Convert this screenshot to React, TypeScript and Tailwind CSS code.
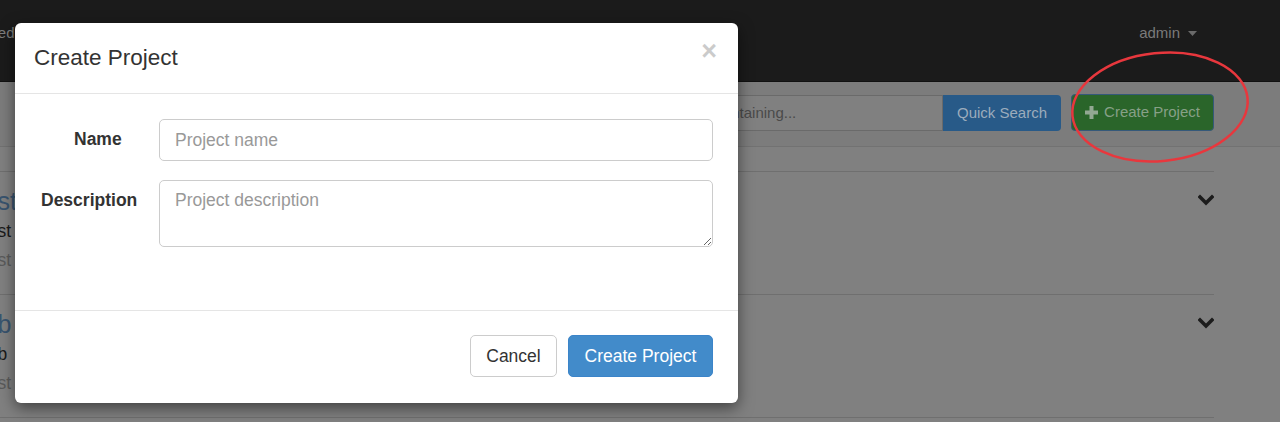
import React from "react";

function Chevron() {
  return (
    <svg width="16" height="13" viewBox="0 0 16 13" className="block">
      <polyline points="2,3 8,9 14,3" fill="none" stroke="#1c1c1c" strokeWidth="3.6" strokeLinecap="square" />
    </svg>
  );
}

function Row({ a, b, c }: { a: string; b: string; c: string }) {
  return (
    <div className="flex h-[123px] border-b border-[#6f6f6f]">
      <div className="flex flex-col pt-[14px]">
        <div className="-ml-[29px] text-[25px] leading-[30px] text-[#38546f]">{a}</div>
        <div className="-ml-[21px] text-[17.5px] leading-[30px] text-[#1a1a1a]">{b}</div>
        <div className="-ml-[21px] text-[17.5px] leading-[29px] text-[#5a5a5a]">{c}</div>
      </div>
      <div className="flex-1" />
      <div className="pt-[22px]">
        <Chevron />
      </div>
    </div>
  );
}

export default function App() {
  return (
    <div
      className="relative h-[422px] w-[1280px] overflow-hidden bg-[#808080]"
      style={{ fontFamily: '"Liberation Sans", Arial, sans-serif' }}
    >
      {/* navbar */}
      <div className="flex h-[82px] items-center bg-[#1b1b1b] border-b border-[#111]">
        <div className="-ml-[28px] mb-[14px] text-[15px] text-[#7d7d7d]">Schedule</div>
        <div className="flex-1" />
        <div className="mr-[83px] mb-[14px] flex items-center gap-[8px] text-[15px] text-[#7a7a7a]">
          <span>admin</span>
          <svg width="9" height="5" viewBox="0 0 9 5">
            <polygon points="0,0 9,0 4.5,5" fill="#6a6a6a" />
          </svg>
        </div>
      </div>

      {/* toolbar */}
      <div className="flex h-[65px] items-start bg-[#7c7c7c] border-b border-[#727272] pt-[13px]">
        <div className="flex-1" />
        <div className="flex h-[36px]">
          <div className="flex w-[299px] items-center border border-[#6a6a6a] bg-[#808080] px-[12px] text-[15px] text-[#4a4a4a]">
            Projects containing...
          </div>
          <div className="flex w-[118px] items-center justify-center rounded-r-[4px] bg-[#285a88] text-[15px] text-[#9cacbc]">
            Quick Search
          </div>
        </div>
        <div className="ml-[10px] mr-[66px] -mt-[1px] flex h-[37px] w-[143px] items-center justify-center gap-[6px] rounded-[4px] border border-[#35597a] bg-[#2a652a] text-[15px] text-[#87a087]">
          <svg width="13" height="13" viewBox="0 0 13 13">
            <rect x="4.5" y="0" width="4" height="13" fill="#93a893" />
            <rect x="0" y="4.5" width="13" height="4" fill="#93a893" />
          </svg>
          <span>Create Project</span>
        </div>
      </div>

      {/* list */}
      <div className="mr-[66px] pt-[24px]">
        <div className="border-t border-[#6f6f6f]" />
        <Row a="Test" b="Test" c="Test" />
        <Row a="Job" b="Job" c="Test" />
      </div>

      {/* red annotation ellipse */}
      <svg className="absolute left-[1060px] top-[45px]" width="200" height="125" viewBox="0 0 200 125">
        <ellipse cx="100" cy="62" rx="88" ry="54" fill="none" stroke="#e8373d" strokeWidth="2.5" transform="rotate(-6 100 62)" />
      </svg>

      {/* modal */}
      <div className="absolute left-[15px] top-[23px] w-[723px] rounded-[6px] bg-white text-[#333] shadow-[0_5px_15px_rgba(0,0,0,0.5)]">
        <div className="flex h-[71px] items-center justify-between border-b border-[#e5e5e5] pl-[19px] pr-[21px]">
          <div className="text-[22.5px] leading-[32px] text-[#333]">Create Project</div>
          <div className="-mt-[14px] text-[27px] font-bold leading-none text-black opacity-20">×</div>
        </div>
        <div className="flex flex-col gap-[19px] pb-[63px] pt-[25px] pr-[25px]">
          <div className="flex items-start">
            <div className="w-[144px] pl-[59px] pt-[8px] text-[17.5px] font-bold leading-[25px]">Name</div>
            <input
              className="h-[42px] flex-1 rounded-[5px] border border-[#ccc] px-[15px] text-[17.5px] text-[#555] outline-none placeholder:text-[#999]"
              placeholder="Project name"
            />
          </div>
          <div className="flex items-start">
            <div className="w-[144px] pl-[26px] pt-[8px] text-[17.5px] font-bold leading-[25px]">Description</div>
            <textarea
              className="h-[67px] flex-1 resize-y rounded-[5px] border border-[#ccc] px-[15px] pt-[7px] text-[17.5px] leading-[25px] text-[#555] outline-none placeholder:text-[#999]"
              placeholder="Project description"
            />
          </div>
        </div>
        <div className="flex justify-end gap-[11px] border-t border-[#e5e5e5] pb-[26px] pr-[25px] pt-[24px]">
          <button className="h-[42px] w-[87px] rounded-[5px] border border-[#ccc] bg-white text-[17.5px] text-[#333]">
            Cancel
          </button>
          <button className="h-[42px] w-[145px] rounded-[5px] border border-[#3b84c9] bg-[#428bca] text-[17.5px] text-white">
            Create Project
          </button>
        </div>
      </div>
    </div>
  );
}
